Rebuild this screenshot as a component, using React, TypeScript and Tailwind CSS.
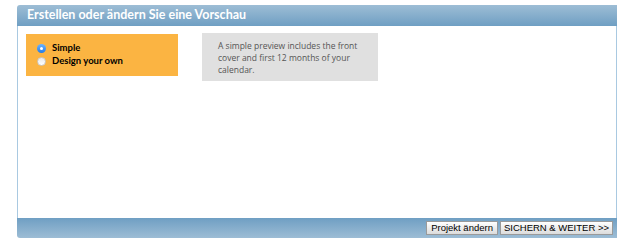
export default function App() {
  return (
    <div className="w-[625px] h-[248px] bg-white pt-[5px] pl-[17px]">
      <div className="w-[600px] flex flex-col">
        <div
          className="h-[21px] rounded-tl-[3px] bg-gradient-to-b from-[#9dbdd5] to-[#6f9fc3] pl-[10px] flex items-center text-white font-bold text-[12.5px]"
          style={{ fontFamily: "Lato, sans-serif" }}
        >
          Erstellen oder ändern Sie eine Vorschau
        </div>
        <div className="h-[192px] border-x border-[#a9c9e1] bg-white flex items-start gap-[24px] pl-[8px] pt-[8px]">
          <div
            className="w-[152px] h-[42px] bg-[#fbb442] pl-[11px] pt-[8px] flex flex-col text-[9.5px] font-bold text-black"
            style={{ fontFamily: "Lato, sans-serif" }}
          >
            <label className="flex items-center gap-[6px] h-[13px]">
              <span className="w-[9px] h-[9px] rounded-full bg-gradient-to-b from-[#6cb4ff] to-[#1e7be8] flex items-center justify-center">
                <span className="w-[3px] h-[3px] rounded-full bg-white" />
              </span>
              Simple
            </label>
            <label className="flex items-center gap-[6px] h-[13px]">
              <span className="w-[9px] h-[9px] rounded-full bg-gradient-to-b from-[#e8e8e8] to-white border border-[#c8c8c8]" />
              Design your own
            </label>
          </div>
          <div
            className="w-[176px] h-[48px] -mt-[1px] bg-[#e0e0e0] pl-[16px] pt-[7px] pr-[8px] text-[8.5px] leading-[12px] text-[#555]"
            style={{ fontFamily: "'Open Sans', sans-serif" }}
          >
            A simple preview includes the front cover and first 12 months of your calendar.
          </div>
        </div>
        <div
          className="h-[20px] rounded-bl-[3px] bg-gradient-to-b from-[#6f9fc3] to-[#9dbdd5] flex items-center justify-end gap-[2px] pr-[4px] text-[9.5px] text-black"
          style={{ fontFamily: "'Liberation Sans', Arial, sans-serif" }}
        >
          <button className="h-[14px] px-[4px] leading-[12px] bg-gradient-to-b from-white to-[#dcdcdc] border border-[#9a9a9a]">
            Projekt ändern
          </button>
          <button className="h-[14px] px-[3px] leading-[12px] bg-gradient-to-b from-white to-[#dcdcdc] border border-[#9a9a9a]">
            SICHERN &amp; WEITER &gt;&gt;
          </button>
        </div>
      </div>
    </div>
  );
}
